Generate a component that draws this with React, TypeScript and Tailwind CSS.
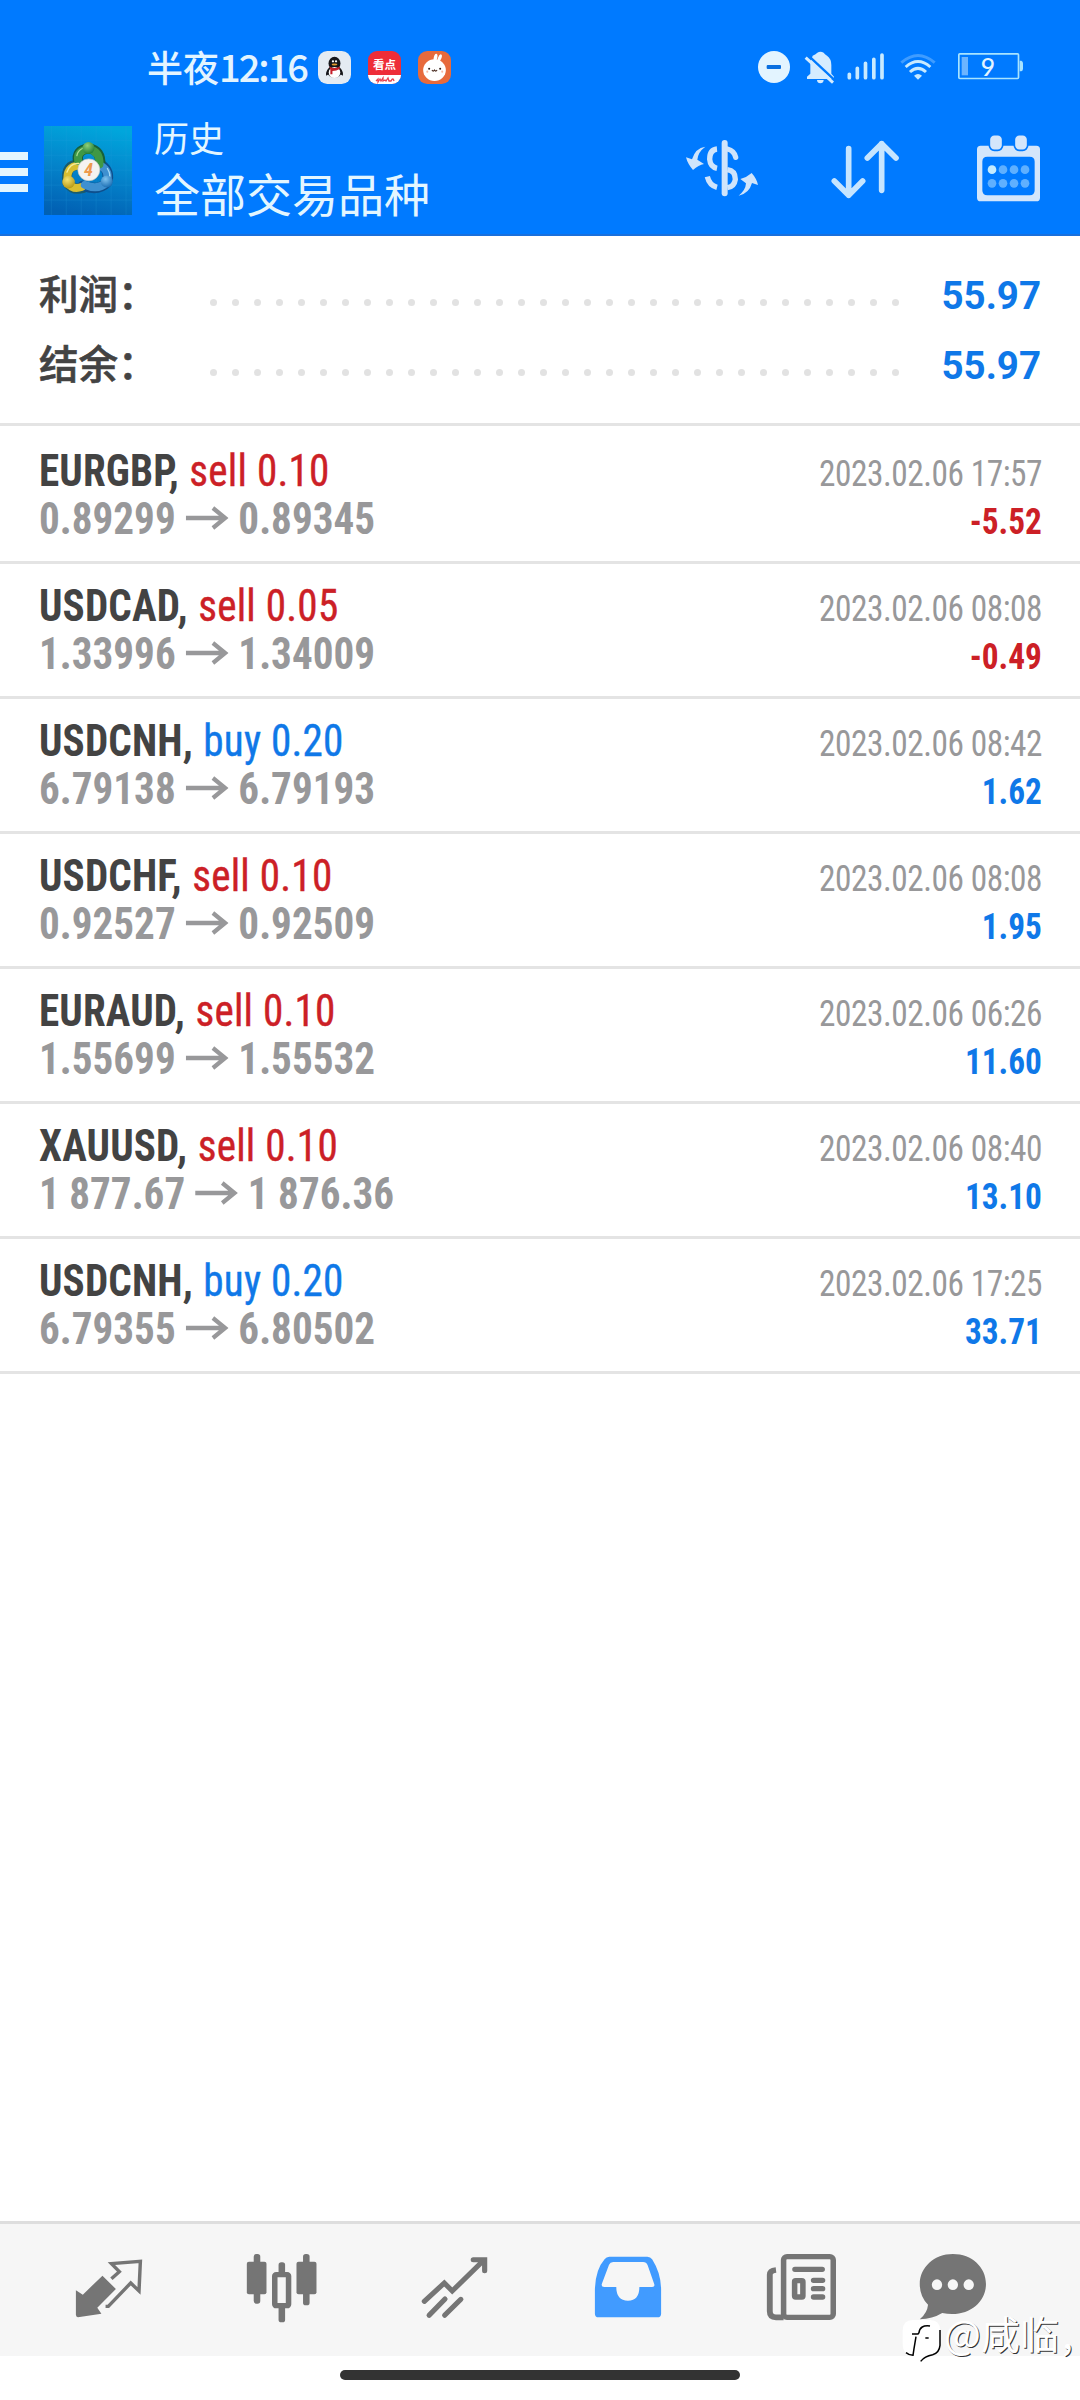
import { FC, ReactNode } from 'react'

interface Deal {
  symbol: string
  side: 'buy' | 'sell'
  volume: string
  open: string
  close: string
  time: string
  profit: string
}

const deals: Deal[] = [
  { symbol: 'EURGBP', side: 'sell', volume: '0.10', open: '0.89299', close: '0.89345', time: '2023.02.06 17:57', profit: '-5.52' },
  { symbol: 'USDCAD', side: 'sell', volume: '0.05', open: '1.33996', close: '1.34009', time: '2023.02.06 08:08', profit: '-0.49' },
  { symbol: 'USDCNH', side: 'buy', volume: '0.20', open: '6.79138', close: '6.79193', time: '2023.02.06 08:42', profit: '1.62' },
  { symbol: 'USDCHF', side: 'sell', volume: '0.10', open: '0.92527', close: '0.92509', time: '2023.02.06 08:08', profit: '1.95' },
  { symbol: 'EURAUD', side: 'sell', volume: '0.10', open: '1.55699', close: '1.55532', time: '2023.02.06 06:26', profit: '11.60' },
  { symbol: 'XAUUSD', side: 'sell', volume: '0.10', open: '1 877.67', close: '1 876.36', time: '2023.02.06 08:40', profit: '13.10' },
  { symbol: 'USDCNH', side: 'buy', volume: '0.20', open: '6.79355', close: '6.80502', time: '2023.02.06 17:25', profit: '33.71' },
]

const StatusBar: FC = () => (
  <div className="flex h-[95px] items-start pt-[49px] pl-[147px] text-[#e3f4ff]">
    <div className="-mt-px flex h-[36px] w-[161px] items-center text-[36px] leading-none font-medium whitespace-nowrap">
      半夜<span className="text-[38px] tracking-[-2px]">12:16</span>
    </div>

    {/* Notification icons */}
    <svg className="mt-[2px] ml-[10px] h-[33px] w-[33px]" viewBox="0 0 32 32">
      <rect width="32" height="32" rx="9" fill="#e4ebf2" />
      <ellipse cx="16" cy="12" rx="5.800" ry="6.500" fill="#15161a" />
      <path d="M10 17q-3 4-2 7l3-2zM22 17q3 4 2 7l-3-2z" fill="#15161a" />
      <ellipse cx="16" cy="20" rx="7" ry="6" fill="#15161a" />
      <ellipse cx="16" cy="20.800" rx="5.600" ry="5.400" fill="#fff" />
      <path d="M11 15q5 3 10 0v2.500q-3 2-7 2v3h-2v-4z" fill="#c4202a" />
      <ellipse cx="16" cy="13" rx="2.800" ry="1" fill="#e39a2e" />
      <circle cx="14.500" cy="10" r="1.100" fill="#fff" />
      <circle cx="17.500" cy="10" r="1.100" fill="#fff" />
    </svg>
    <div className="mt-[2px] ml-[17px] flex h-[33px] w-[33px] flex-col overflow-hidden rounded-[9px] bg-[#ee2d38] text-center">
      <span className="h-[24px] text-[11.500px] leading-[26px] font-bold text-white">看点</span>
      <svg className="h-[9px] w-[33px] bg-white" viewBox="0 0 33 9">
        <path d="M8 6l2-2v3l2-3 1 2 2-3v3l2-1 1 1 2-3 1 3h2q2-4 3 0" fill="none" stroke="#e84350" strokeWidth="1.300" />
      </svg>
    </div>
    <svg className="mt-[2px] ml-[17px] h-[33px] w-[33px]" viewBox="0 0 32 32">
      <rect width="32" height="32" rx="9" fill="#e76a3c" />
      <ellipse cx="17" cy="6.500" rx="1.700" ry="4" transform="rotate(12 17 6.500)" fill="#fff" />
      <ellipse cx="21" cy="7" rx="1.600" ry="4" transform="rotate(22 21 7)" fill="#fff" />
      <ellipse cx="16" cy="18.500" rx="11" ry="10.500" fill="#fff" />
      <path d="M13.500 18.500q1.200 2 2.500 0q1.200 2 2.500 0" fill="none" stroke="#4a2c22" strokeWidth="1" />
      <circle cx="10.800" cy="17.300" r="1" fill="#33221c" />
      <circle cx="21.500" cy="17.300" r="1" fill="#33221c" />
      <circle cx="9" cy="20" r="1" fill="#f5b9a5" />
      <circle cx="23.500" cy="20" r="1" fill="#f5b9a5" />
    </svg>

    {/* System icons */}
    <div className="mt-[1px] ml-auto flex pr-[56px]">
      <svg className="h-[36px] w-[36px]" viewBox="288 60 108 108">
        <circle cx="342" cy="111" r="48" fill="#e3f4ff" />
        <rect x="320" y="105" width="43" height="12" rx="3" fill="#0a6fe0" />
      </svg>
      <svg className="ml-[10px] h-[36px] w-[36px]" viewBox="426 60 108 108" fill="#d5ecff">
        <path d="M458 77q10-4 14-9q9-5 19 0q3 5 10 9q13 9 13 28v26l8 9v7H441v-7l10-9v-34z" />
        <path d="M471 150h20q-1 10-10 10t-10-10z" />
        <path d="M442 74L528 154" stroke="#007aff" strokeWidth="7" />
        <path d="M437 83L519 158" stroke="#d5ecff" strokeWidth="9" />
      </svg>
      <svg className="ml-[8px] h-[36px] w-[40px]" viewBox="558 60 120 108" fill="none" stroke="#c8eaff" strokeWidth="11" strokeLinecap="round">
        <path d="M568 133V143M592 115V143M616.500 100V143M641.500 88V143M666 75V143" />
      </svg>
      <svg className="ml-[14px] h-[36px] w-[36px]" viewBox="720 60 108 108" fill="none" stroke="#c8eaff" strokeWidth="9">
        <path d="M724 98Q774 55 824 98" stroke="#3f9cff" />
        <path d="M737 111Q774 78 811 111" />
        <path d="M750 126Q774 104 798 126" />
        <path d="M762 137Q774 127 786 137L774 149Z" fill="#c8eaff" stroke="none" />
      </svg>
      <svg className="ml-[22px] h-[36px] w-[66px] overflow-visible" viewBox="894 60 198 108">
        <rect x="896.500" y="71.500" width="179" height="74" rx="3" fill="none" stroke="#a8e4ff" strokeWidth="5" />
        <rect x="905" y="81" width="19" height="55" fill="#6cb4ff" />
        <path d="M1079 92h5q5 2 5 8v16q0 6-5 8h-5z" fill="#a8e4ff" />
        <text x="984" y="138" textAnchor="middle" fontSize="74" fontWeight="500" className="font-['Lato']" fill="#e3f4ff">9</text>
      </svg>
    </div>
  </div>
)

const AppLogo: FC = () => (
  <svg className="h-[89px] w-[88px]" viewBox="11 17 265 268">
    <defs>
      <linearGradient id="sky" x1="0.600" y1="0" x2="0.400" y2="1">
        <stop offset="0" stopColor="#00a6dc" />
        <stop offset="0.500" stopColor="#0484cb" />
        <stop offset="1" stopColor="#0161b4" />
      </linearGradient>
      <radialGradient id="green" cx="0.400" cy="0.300" r="0.700">
        <stop offset="0" stopColor="#8fcf78" />
        <stop offset="1" stopColor="#23803a" />
      </radialGradient>
      <radialGradient id="yellow" cx="0.400" cy="0.300" r="0.700">
        <stop offset="0" stopColor="#f5e36f" />
        <stop offset="1" stopColor="#b79a17" />
      </radialGradient>
      <radialGradient id="blue" cx="0.400" cy="0.300" r="0.700">
        <stop offset="0" stopColor="#7fc2ee" />
        <stop offset="1" stopColor="#1d70b5" />
      </radialGradient>
    </defs>
    <rect x="11" y="17" width="265" height="268" fill="url(#sky)" />
    <path d="M33 17V285M78 17V285M123 17V285M168 17V285M213 17V285M258 17V285M11 60H276M11 105H276M11 150H276M11 195H276M11 240H276" stroke="#2aa2e0" strokeWidth="1.500" opacity="0.400" />
    <g fill="none" strokeLinecap="round">
      <path d="M82 188Q72 130 122 134M82 188Q98 212 130 203" stroke="#1a5c6c" strokeWidth="31" />
      <path d="M128 197Q175 214 200 188Q212 155 184 134" stroke="#0e4f8d" strokeWidth="31" />
      <path d="M114 125Q106 90 145 84Q184 90 180 134" stroke="#17603a" strokeWidth="31" />
      <path d="M82 188Q76 136 118 136M82 188Q98 210 124 201" stroke="#d8be30" strokeWidth="24" />
      <path d="M134 194Q175 212 200 186Q210 155 184 138" stroke="#3e90d0" strokeWidth="24" />
      <path d="M114 122Q108 92 145 86Q180 94 178 132" stroke="#3f9845" strokeWidth="24" />
      <path d="M80 156Q90 128 116 130" stroke="#f6eb96" strokeWidth="4" />
      <path d="M202 145Q214 165 206 178" stroke="#a5d8f5" strokeWidth="4" />
      <path d="M110 106Q112 92 128 84" stroke="#a9dc90" strokeWidth="4" />
    </g>
    <circle cx="145" cy="83" r="18" fill="url(#green)" />
    <circle cx="85" cy="186" r="19" fill="url(#yellow)" />
    <circle cx="200" cy="184" r="18" fill="url(#blue)" />
    <circle cx="146" cy="149" r="33" fill="#f5f3f0" stroke="#c9c9c4" strokeWidth="2" />
    <text x="145" y="169" textAnchor="middle" fontSize="55" fontWeight="700" fontStyle="italic" className="font-['Roboto_Condensed']" fill="#ee9a4d">4</text>
  </svg>
)

const AppBar: FC = () => (
  <div className="flex h-[141px] items-start border-b-2 border-[#1a70dc]">
    {/* Menu */}
    <div className="mt-[57px] flex w-[28px] flex-col gap-[8px]">
      <span className="h-2 bg-[#e3f6ff]" />
      <span className="h-2 bg-[#e3f6ff]" />
      <span className="h-2 bg-[#e3f6ff]" />
    </div>
    <div className="mt-[31px] ml-4">
      <AppLogo />
    </div>
    <div className="mt-[17px] ml-[22px] text-[#e3f6ff]">
      <div className="text-[35px] leading-[50px]">历史</div>
      <h1 className="text-[46px] leading-[60px]">全部交易品种</h1>
    </div>

    {/* Actions */}
    <div className="mt-[35px] ml-auto flex pr-[38px]">
      <svg className="h-[72px] w-[76px]" viewBox="72 300 228 216" fill="none" stroke="#cfe4fb" strokeWidth="16">
        <path d="M194 339V490" strokeWidth="18" strokeLinecap="round" />
        <path d="M171 357Q149 359 149 388Q151 411 171 415" />
        <path d="M202 357Q223 362 227 382" strokeLinecap="round" />
        <path d="M202 419Q226 422 226 448Q223 470 202 473" />
        <path d="M142 440Q148 466 171 472" />
        <path d="M136 350Q114 366 112 389L132 402Q116 405 99 420Q83 402 78 382L96 388Q106 354 136 350Z" fill="#cfe4fb" stroke="none" />
        <path d="M236 497Q257 480 258 460L241 447Q259 443 275 429Q290 446 294 465L276 459Q267 491 236 497Z" fill="#cfe4fb" stroke="none" />
      </svg>
      <svg className="ml-[68px] h-[72px] w-[74px]" viewBox="504 300 222 216" fill="none" stroke="#c6e5ff" strokeWidth="17" strokeLinecap="round" strokeLinejoin="round">
        <path d="M566 356V496M523 453L566 496L608 453M665 481V341M622 384L665 341L708 384" />
      </svg>
      <svg className="ml-[72px] h-[72px] w-[68px]" viewBox="942 300 204 216" fill="#d4e6fb">
        <path fillRule="evenodd" d="M962 347H1129Q1140 347 1140 358V503Q1140 514 1129 514H962Q951 514 951 503V358Q951 347 962 347ZM982 380Q967 380 967 395V481Q967 496 982 496H1109Q1124 496 1124 481V395Q1124 380 1109 380Z" />
        <rect x="988" y="314" width="40" height="47" rx="15" stroke="#007aff" strokeWidth="5" />
        <rect x="1063" y="314" width="40" height="47" rx="15" stroke="#007aff" strokeWidth="5" />
        <circle cx="996" cy="419" r="13" fill="#c4ebff" />
        <g fill="#5fb0ff">
          <circle cx="1029" cy="419" r="13" />
          <circle cx="1062" cy="419" r="13" />
          <circle cx="1095" cy="419" r="13" />
          <circle cx="996" cy="460" r="13" />
          <circle cx="1029" cy="460" r="13" />
          <circle cx="1062" cy="460" r="13" />
          <circle cx="1095" cy="460" r="13" />
        </g>
      </svg>
    </div>
  </div>
)

const SummaryRow: FC<{ label: string; value: string }> = ({ label, value }) => (
  <div className="flex h-[70px] items-start">
    <span className="w-[171px] text-[39.500px] leading-[70px] font-medium text-[#434343] [-webkit-text-stroke:0.6px_#434343]">{label}</span>
    <span className="mt-[42px] flex w-[689px] justify-between">
      {Array.from({ length: 32 }, (_, i) => (
        <span key={i} className="h-[7px] w-[7px] rounded-full bg-[#e2e2e2]" />
      ))}
    </span>
    <span className="ml-auto pt-[4px] font-['Roboto'] text-[38.500px] leading-[70px] font-bold text-[#0f78e8]">{value}</span>
  </div>
)

const DealRow: FC<{ deal: Deal }> = ({ deal }) => (
  <li className="flex h-[135px] justify-between border-b-3 border-[#e4e4e4] pr-[38px] pl-[39px] font-['Roboto_Condensed']">
    <div className="origin-left scale-x-[0.935] pt-[18px] text-[44px] leading-[48px] whitespace-pre">
      <div>
        <span className="font-bold tracking-[0.150px] text-[#434343]">{deal.symbol},</span>{' '}
        <span
          className={
            deal.side === 'sell'
              ? 'ml-px tracking-[0.250px] text-[#cc2026] [-webkit-text-stroke:0.4px_#cc2026]'
              : 'ml-px tracking-[0.250px] text-[#0f78e8] [-webkit-text-stroke:0.4px_#0f78e8]'
          }
        >
          {deal.side} {deal.volume}
        </span>
      </div>
      <div className="flex font-bold text-[#98989a]">
        {deal.open}
        <svg className="mt-[11px] mr-[10px] ml-[11px] h-[24px] w-[46px]" viewBox="0 0 46 24" fill="none" stroke="#98989a" strokeWidth="4.500">
          <path d="M0 12H43M29 2L42 12L29 22" />
        </svg>
        {deal.close}
      </div>
    </div>
    <div className="origin-right scale-x-[0.925] pt-[21px] text-right text-[36px] leading-[48px]">
      <div className="tracking-[-0.500px] text-[#98989a]">{deal.time}</div>
      <div className={deal.profit.startsWith('-') ? 'font-bold text-[#cc2026]' : 'font-bold text-[#0f78e8]'}>{deal.profit}</div>
    </div>
  </li>
)

const NavItem: FC<{ viewBox: string; last?: boolean; children: ReactNode }> = ({ viewBox, last, children }) => (
  <button className={last ? 'flex w-[130px] justify-center' : 'flex w-[173px] justify-center'} type="button">
    <svg className="h-[70px] w-[80px]" viewBox={viewBox} preserveAspectRatio="none" fill="#757575">
      {children}
    </svg>
  </button>
)

const BottomNav: FC = () => (
  <nav className="flex h-[135px] items-start border-t-3 border-[#dedede] bg-[#f6f6f6] pt-[30px] pl-[22px]">
    {/* Quotes */}
    <NavItem viewBox="199 132 232 210">
      <path d="M296 197L335 237L281 293L293 311L225 322Q219 321 219 314V241L239 254Z" />
      <path d="M322 206L345 185L322 161L406 154L402 243L378 219L313 289L305 289" fill="none" stroke="#757575" strokeWidth="10" />
    </NavItem>
    {/* Charts */}
    <NavItem viewBox="701 132 232 210">
      <rect x="735" y="132" width="19" height="149" rx="8" />
      <rect x="715" y="155" width="57" height="98" rx="6" />
      <rect x="878" y="132" width="19" height="154" rx="8" />
      <rect x="859" y="155" width="58" height="98" rx="6" />
      <rect x="807" y="157" width="19" height="180" rx="8" />
      <rect x="796" y="194" width="40" height="93" rx="4" fill="#f6f6f6" stroke="#757575" strokeWidth="16" />
    </NavItem>
    {/* Trade */}
    <NavItem viewBox="1204 132 232 210">
      <g fill="none" stroke="#757575" strokeWidth="15" strokeLinecap="round">
        <path d="M1231 274L1289 219L1312 243L1404 150M1373 149H1406V182" />
        <path d="M1245 316L1291 267M1290 316L1337 268" />
      </g>
    </NavItem>
    {/* History */}
    <NavItem viewBox="138 132 232 210">
      <path fill="#419bff" fillRule="evenodd" d="M200 140H310Q319 140 324 148Q350 190 350 240V311Q350 322 339 322H169Q158 322 158 311V240Q159 180 186 148Q191 140 200 140ZM211 156Q202 156 199 164L178 222Q176 231 185 231H220Q220 272 254 272Q287 272 287 231H324Q333 231 330 222L311 166Q307 156 298 156Z" />
    </NavItem>
    {/* News */}
    <NavItem viewBox="640.500 132 232 210">
      <g fill="none" stroke="#757575">
        <rect x="706" y="140" width="144" height="182" rx="10" strokeWidth="16" />
        <path d="M684 180Q666 182 666 194V304Q666 322 684 322H706" strokeWidth="17" />
        <path d="M739 178H818M793 211H819M793 236H819M793 261H819" strokeWidth="16" strokeLinecap="round" />
        <rect x="738" y="212" width="24" height="49" rx="3" strokeWidth="16" />
      </g>
    </NavItem>
    {/* Messages */}
    <NavItem viewBox="1080.500 132 232 210" last>
      <path d="M1199 132C1255 132 1295 172 1295 222C1295 280 1240 325 1168 309Q1140 327 1103 328Q1125 308 1127 284Q1103 260 1103 222C1103 172 1145 132 1199 132Z" />
      <g fill="#f6f6f6">
        <ellipse cx="1153" cy="224" rx="15" ry="16" />
        <ellipse cx="1199" cy="224" rx="15" ry="16" />
        <ellipse cx="1245" cy="224" rx="15" ry="16" />
      </g>
    </NavItem>
  </nav>
)

const Watermark: FC = () => (
  <div className="absolute top-[2316px] left-[900px] flex items-start">
    <svg className="h-[50px] w-[42px]" viewBox="30 50 126 150" fill="none">
      <path d="M68 62H120Q150 62 150 92V138Q150 160 132 166L108 168Q96 180 88 184L78 172Q38 170 38 134V94Q38 62 68 62Z" fill="#fff" />
      <path d="M150 92V138Q148 160 128 166Q104 170 92 186" stroke="#000" strokeWidth="4.500" />
      <path d="M120 80Q90 76 87 100L84 104H66M78 112L72 148L69 168Q58 168 48 160M106 116H116" stroke="#000" strokeWidth="4.500" />
    </svg>
    <span className="-mt-[6px] ml-[2px] text-[39px] leading-[44px] whitespace-nowrap text-white [text-shadow:1px_1px_0_#333]">
      @咸临<span className="ml-[3px]">,</span>
    </span>
  </div>
)

export default function App() {
  return (
    <div className="relative flex h-[2400px] w-[1080px] flex-col overflow-hidden bg-white font-['Noto_Sans_CJK_SC',sans-serif]">
      <header className="bg-[#007aff]">
        <StatusBar />
        <AppBar />
      </header>

      <section className="border-b-3 border-[#e4e4e4] px-[39px] pt-[21px] pb-[26px]">
        <SummaryRow label="利润：" value="55.97" />
        <SummaryRow label="结余：" value="55.97" />
      </section>

      <ul className="flex-1 pt-[3px]">
        {deals.map((deal, i) => (
          <DealRow key={i} deal={deal} />
        ))}
      </ul>

      <BottomNav />
      <div className="flex h-[44px] justify-center pt-[14px]">
        <span className="h-[10px] w-[400px] rounded-full bg-[#333]" />
      </div>
      <Watermark />
    </div>
  )
}
